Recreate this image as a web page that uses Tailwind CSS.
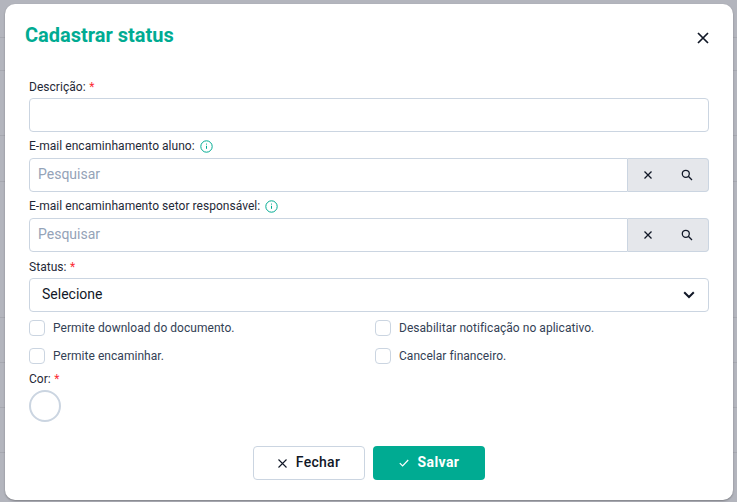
<!DOCTYPE html>
<html lang="pt-BR">
<head>
  <meta charset="UTF-8">
  <meta name="viewport" content="width=device-width, initial-scale=1.0">
  <title>Cadastrar status</title>
  <script src="https://cdn.jsdelivr.net/npm/@tailwindcss/browser@4"></script>
</head>
<body class="relative w-[737px] h-[502px] overflow-hidden bg-[#b3b5bd] font-['Roboto',sans-serif]">
  <!-- table behind the overlay -->
  <div class="flex flex-col">
    <div class="h-[38px] border-b border-[#a6a8b0]"></div>
    <div class="h-[33px] border-b border-[#a6a8b0]"></div>
    <div class="h-[65px] border-b border-[#a6a8b0]"></div>
    <div class="h-[46px] border-b border-[#a6a8b0]"></div>
    <div class="h-[136px] border-b border-[#a6a8b0]"></div>
    <div class="h-[45px] border-b border-[#a6a8b0]"></div>
    <div class="h-[45px] border-b border-[#a6a8b0]"></div>
    <div class="h-[45px] border-b border-[#a6a8b0]"></div>
  </div>

  <div class="absolute left-[5px] top-[4px] w-[728px] h-[496px] bg-white rounded-[10px] shadow-[0_1px_2px_rgba(0,0,0,0.3)]">
    <div class="flex justify-between pl-[20px] pr-[24px] pt-[19px]">
      <h1 class="text-[20px] leading-[24px] font-bold text-[#00ab92]">Cadastrar status</h1>
      <svg class="mt-[9px] w-[12px] h-[12px]" viewBox="0 0 12 12" fill="none" stroke="#111827" stroke-width="1.7"><path d="M1 1l10 10M11 1L1 11"/></svg>
    </div>

    <form class="px-[24px] pt-[32px]">
      <label class="flex items-center h-[16px] text-[12px] font-[450] tracking-[0.04px] text-[#1f2937]">Descrição:<span class="ml-[3.5px] text-red-500">*</span></label>
      <input type="text" class="mt-[3px] block w-[680px] h-[34px] border border-[#cbd5e1] rounded-[4px] bg-white">

      <label class="mt-[4px] flex items-center h-[20px] text-[12px] font-[450] tracking-[0.04px] text-[#1f2937]">E-mail encaminhamento aluno:
        <svg class="ml-[5px] w-[13px] h-[13px]" viewBox="0 0 13 13" fill="none" stroke="#00ab92"><circle cx="6.5" cy="6.5" r="5.7"/><path d="M6.5 5.8v3M6.5 3.6v1"/></svg>
      </label>
      <div class="mt-[2px] flex w-[680px] h-[34px]">
        <input type="text" placeholder="Pesquisar" class="flex-1 min-w-0 px-[8px] pb-[2px] border border-[#cbd5e1] rounded-l-[4px] text-[14px] text-[#1f2937] placeholder:text-[#94a3b8]">
        <div class="flex items-center w-[81px] border border-l-0 border-[#cbd5e1] rounded-r-[4px] bg-[#e5e7eb]">
          <svg class="ml-[16px] w-[8px] h-[8px]" viewBox="0 0 8 8" fill="none" stroke="#111827" stroke-width="1.3"><path d="M.5.5l7 7M7.5.5l-7 7"/></svg>
          <svg class="ml-[29px] w-[12px] h-[12px]" viewBox="0 0 12 12" fill="none" stroke="#111827" stroke-width="1.3"><circle cx="4.8" cy="4.8" r="3.5"/><path d="M7.3 7.3l3.7 3.7"/></svg>
        </div>
      </div>

      <label class="mt-[4px] flex items-center h-[20px] text-[12px] font-[450] tracking-[0.04px] text-[#1f2937]">E-mail encaminhamento setor responsável:
        <svg class="ml-[5px] w-[13px] h-[13px]" viewBox="0 0 13 13" fill="none" stroke="#00ab92"><circle cx="6.5" cy="6.5" r="5.7"/><path d="M6.5 5.8v3M6.5 3.6v1"/></svg>
      </label>
      <div class="mt-[2px] flex w-[680px] h-[34px]">
        <input type="text" placeholder="Pesquisar" class="flex-1 min-w-0 px-[8px] pb-[2px] border border-[#cbd5e1] rounded-l-[4px] text-[14px] text-[#1f2937] placeholder:text-[#94a3b8]">
        <div class="flex items-center w-[81px] border border-l-0 border-[#cbd5e1] rounded-r-[4px] bg-[#e5e7eb]">
          <svg class="ml-[16px] w-[8px] h-[8px]" viewBox="0 0 8 8" fill="none" stroke="#111827" stroke-width="1.3"><path d="M.5.5l7 7M7.5.5l-7 7"/></svg>
          <svg class="ml-[29px] w-[12px] h-[12px]" viewBox="0 0 12 12" fill="none" stroke="#111827" stroke-width="1.3"><circle cx="4.8" cy="4.8" r="3.5"/><path d="M7.3 7.3l3.7 3.7"/></svg>
        </div>
      </div>

      <label class="mt-[7px] flex items-center h-[16px] text-[12px] font-[450] tracking-[0.04px] text-[#1f2937]">Status:<span class="ml-[3.5px] text-red-500">*</span></label>
      <div class="mt-[3px] flex items-center justify-between w-[680px] h-[34px] pl-[12px] pr-[13px] border border-[#cbd5e1] rounded-[4px] text-[14px] text-[#111827]">
        <span class="-mt-[2px]">Selecione</span>
        <svg class="w-[12px] h-[8px]" viewBox="0 0 12 8" fill="none" stroke="#111827" stroke-width="2"><path d="M1.2 1.3L6 6l4.8-4.7"/></svg>
      </div>

      <div class="mt-[8px] grid grid-cols-[346px_1fr] gap-y-[12px] text-[12px] font-[450] tracking-[0.04px] text-[#334155]">
        <label class="flex items-center gap-[8px] h-[16px]"><span class="w-[16px] h-[16px] border border-[#cbd5e1] rounded-[4px]"></span>Permite download do documento.</label>
        <label class="flex items-center gap-[8px] h-[16px]"><span class="w-[16px] h-[16px] border border-[#cbd5e1] rounded-[4px]"></span>Desabilitar notificação no aplicativo.</label>
        <label class="flex items-center gap-[8px] h-[16px]"><span class="w-[16px] h-[16px] border border-[#cbd5e1] rounded-[4px]"></span>Permite encaminhar.</label>
        <label class="flex items-center gap-[8px] h-[16px]"><span class="w-[16px] h-[16px] border border-[#cbd5e1] rounded-[4px]"></span>Cancelar financeiro.</label>
      </div>

      <label class="mt-[7px] flex items-center h-[16px] text-[12px] font-[450] tracking-[0.04px] text-[#1f2937]">Cor:<span class="ml-[3.5px] text-red-500">*</span></label>
      <div class="mt-[3px] w-[32px] h-[32px] rounded-full border-2 border-[#cbd5e1]"></div>

      <div class="mt-[24px] flex justify-center gap-[8px]">
        <button type="button" class="flex items-center justify-center gap-[9px] w-[112px] h-[34px] border border-[#cbd5e1] rounded-[4px] bg-white text-[14px] font-medium tracking-[0.3px] text-[#111827]">
          <svg class="w-[9px] h-[9px]" viewBox="0 0 9 9" fill="none" stroke="#111827" stroke-width="1.1"><path d="M.5.5l8 8M8.5.5l-8 8"/></svg>
          <span class="-mt-[2px]">Fechar</span>
        </button>
        <button type="button" class="flex items-center justify-center gap-[9px] w-[112px] h-[34px] rounded-[4px] bg-[#00ab92] text-[14px] font-bold tracking-[0.4px] text-white">
          <svg class="w-[10px] h-[8px]" viewBox="0 0 10 8" fill="none" stroke="#fff" stroke-width="1.2"><path d="M.8 4.2l2.8 2.8L9.2 1"/></svg>
          <span class="-mt-[2px]">Salvar</span>
        </button>
      </div>
    </form>
  </div>
</body>
</html>
